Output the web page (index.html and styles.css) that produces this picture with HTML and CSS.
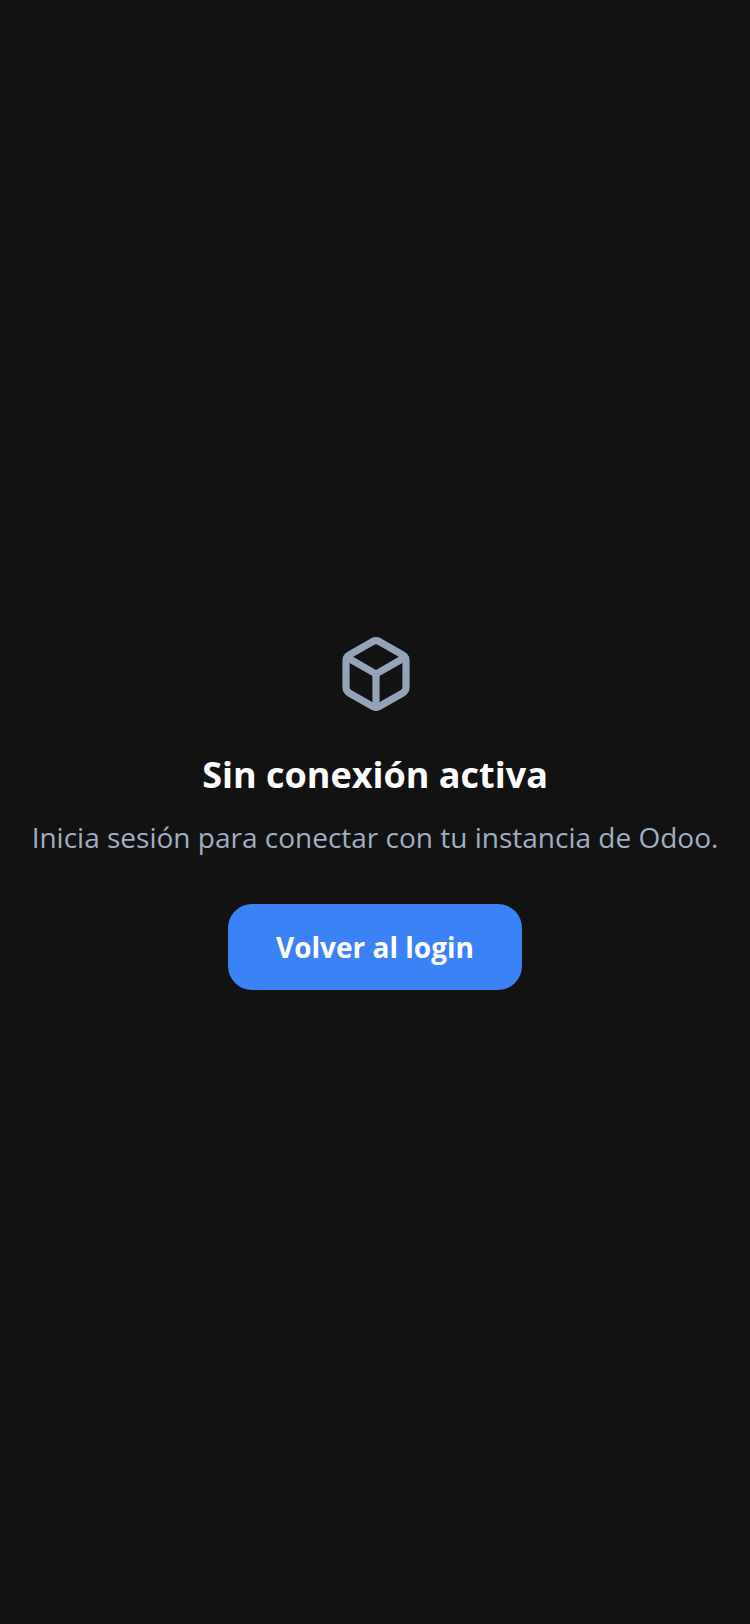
FILE: index.html
```html
<!DOCTYPE html>
<html lang="es">
<head>
<meta charset="utf-8">
<title>Sin conexión activa</title>
<link rel="stylesheet" href="styles.css">
</head>
<body>
<main class="screen">
  <svg class="icon" viewBox="0 0 24 24" fill="none" stroke="currentColor" stroke-width="2.15" stroke-linecap="round" stroke-linejoin="round">
    <path d="M21 16V8a2 2 0 0 0-1-1.73l-7-4a2 2 0 0 0-2 0l-7 4A2 2 0 0 0 3 8v8a2 2 0 0 0 1 1.73l7 4a2 2 0 0 0 2 0l7-4A2 2 0 0 0 21 16z"/>
    <path d="M3.3 7 12 12l8.7-5"/>
    <path d="M12 22V12"/>
  </svg>
  <h1 class="title">Sin conexión activa</h1>
  <p class="subtitle">Inicia sesión para conectar con tu instancia de Odoo.</p>
  <button class="button">Volver al login</button>
</main>
</body>
</html>
```
FILE: styles.css
```css
html, body { margin: 0; padding: 0; height: 100%; }
body { background: #121212; font-family: "Open Sans", sans-serif; }
.screen {
  height: 1624px;
  box-sizing: border-box;
  display: flex;
  flex-direction: column;
  align-items: center;
  justify-content: center;
  padding: 0 24px;
}
.icon { width: 80px; height: 80px; color: #94a3b8; display: block; margin-left: 1px; }
.title { margin: 37px 0 0; color: #fff; font-size: 36px; line-height: 48px; font-weight: 700; }
.subtitle { margin: 17px 0 0; color: #a0aec0; font-size: 28px; line-height: 42px; white-space: nowrap; }
.button {
  margin-top: 46px;
  border: 0;
  border-radius: 24px;
  background: #3b82f6;
  color: #fff;
  font: 700 28px/38px "Open Sans", sans-serif;
  padding: 24px 48px;
}
```
